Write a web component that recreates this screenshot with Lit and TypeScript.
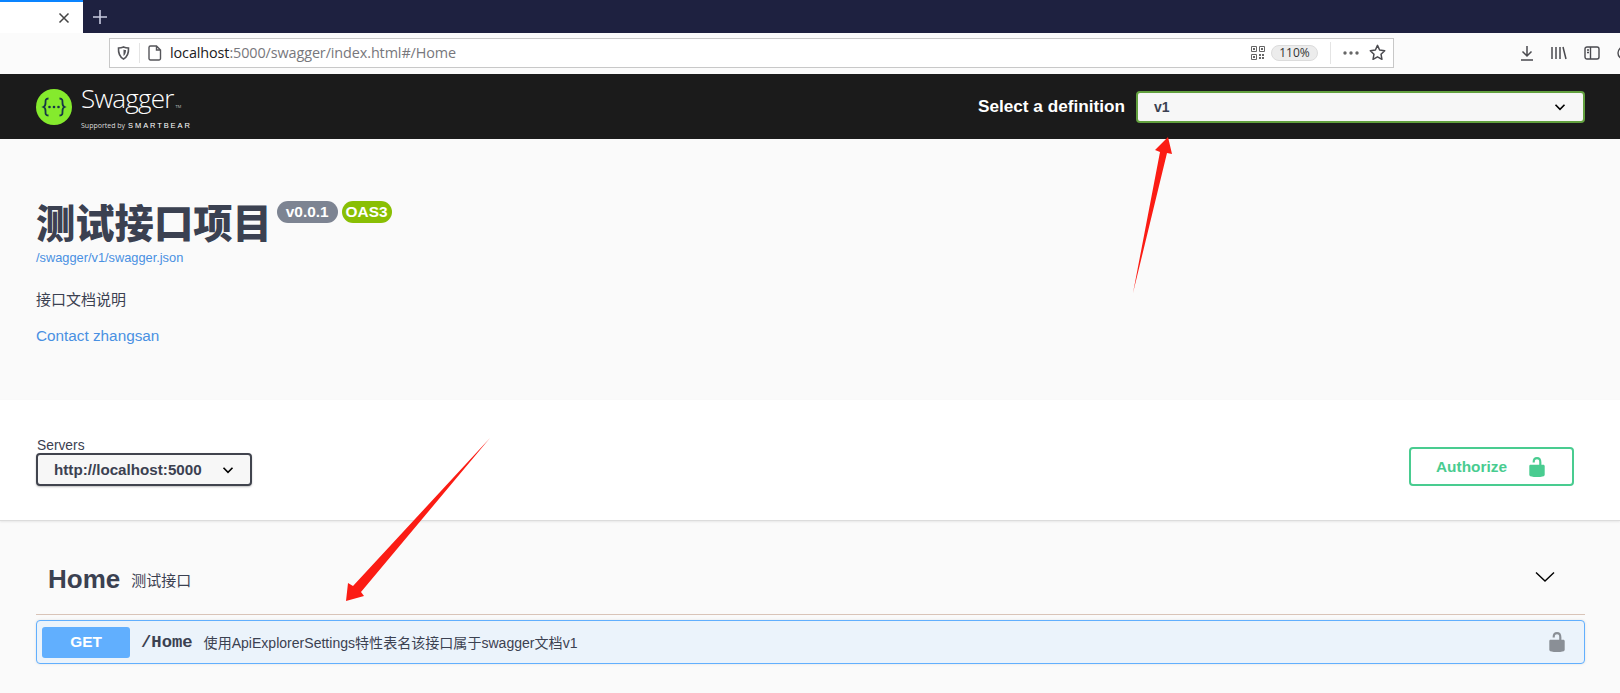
import { LitElement, html, css, svg } from "lit";
import { customElement } from "lit/decorators.js";

const lock = svg`<path d="M15.8 8H14V5.6C14 2.703 12.665 1 10 1 7.334 1 6 2.703 6 5.6V6h2v-.801C8 3.754 8.797 3 10 3c1.203 0 2 .754 2 2.199V8H4c-.553 0-1 .646-1 1.199V17c0 .549.428 1.139.951 1.307l1.197.387C5.672 18.861 6.55 19 7.1 19h5.8c.549 0 1.428-.139 1.951-.307l1.196-.387c.524-.167.953-.757.953-1.306V9.199C17 8.646 16.352 8 15.8 8z"/>`;

const chevron = svg`<path d="M2 5l6 6 6-6" fill="none" stroke="#000" stroke-width="2.2"/>`;

@customElement("app-root")
export class AppRoot extends LitElement {
  static styles = css`
    :host { display: block; position: relative; width: 1620px; height: 693px; overflow: hidden; background: #fafafa; font-family: "Liberation Sans", "Noto Sans CJK SC", sans-serif; color: #3b4151; }
    a { color: #4990e2; text-decoration: none; }
    svg { display: block; flex: none; }

    .tabs { height: 33px; background: #1e2140; display: flex; align-items: center; }
    .tab { width: 83px; height: 33px; box-sizing: border-box; background: #fff; border-top: 2px solid #0a84ff; display: flex; justify-content: flex-end; align-items: center; padding-right: 13px; }
    .plus { margin-left: 9px; }

    .toolbar { height: 41px; box-sizing: border-box; background: #fbfbfb; display: flex; align-items: center; padding: 0 0 2px 109px; }
    .url { flex: none; width: 1285px; height: 30px; box-sizing: border-box; background: #fff; border: 1px solid #c8c8c8; display: flex; align-items: center; padding: 0 7px 0 7px; font-family: "Open Sans", sans-serif; font-size: 14.4px; color: #77777c; }
    .url .sep { width: 1px; height: 20px; background: #e4e4e4; margin: 0 8px 0 9px; }
    .url b { font-weight: 400; color: #202023; }
    .addr { margin-left: 8px; flex: 1; letter-spacing: -0.1px; }
    .pill { width: 47px; height: 16px; border-radius: 8px; background: #ececec; border: 1px solid #dcdcdc; box-sizing: border-box; font: 12px "Open Sans", sans-serif; color: #333; display: flex; align-items: center; justify-content: center; margin: 0 12px 0 6px; }
    .dots { margin: 0 10px 0 12px; }
    .url .sep2 { width: 1px; height: 22px; background: #e4e4e4; }
    .tools { flex: none; display: flex; align-items: center; gap: 17px; margin-left: 126px; }

    .topbar { height: 65px; background: #1b1b1b; display: flex; align-items: center; justify-content: space-between; padding: 0 35px 0 36px; }
    .logo { display: flex; align-items: center; gap: 9px; color: #fff; margin-top: 1px; }
    .logo-text { display: flex; flex-direction: column; }
    .logo-name { font: 300 26px/30px "Open Sans", sans-serif; letter-spacing: -0.8px; }
    .logo-name sup { font-size: 4px; vertical-align: baseline; letter-spacing: 0; margin-left: 2px; }
    .logo-sub { font: 7px/10px "Open Sans", sans-serif; color: #ddd; display: flex; align-items: center; gap: 3px; margin-top: -1px; }
    .logo-sub b { font: 400 7.500px/10px "Liberation Sans", sans-serif; letter-spacing: 1.900px; color: #fff; }
    .def { display: flex; align-items: center; gap: 11px; color: #fff; font-weight: 700; font-size: 17.200px; }
    .def-select { width: 449px; height: 32px; box-sizing: border-box; border: 2px solid #62a03f; border-radius: 4px; background: #f7f7f7; color: #3b4151; padding: 0 17px 0 16px; display: flex; align-items: center; justify-content: space-between; font-size: 14px; }

    .info { height: 261px; box-sizing: border-box; padding: 60px 36px 0; background: #fafafa; }
    .title { display: flex; align-items: flex-start; gap: 4px; }
    h1 { margin: 0; font-size: 39.300px; line-height: 50px; font-weight: 900; color: #3b4151; }
    .badge { height: 22px; border-radius: 11px; color: #fff; font-weight: 700; font-size: 15.400px; display: flex; align-items: center; padding: 0 9px; margin-top: 2px; }
    .badge.gray { background: #7d8492; margin-left: 1px; }
    .badge.green { background: #89bf04; padding: 0 4px; }
    .json { display: block; font-size: 12.800px; line-height: 16px; margin-top: 1px; }
    .desc { font-size: 15px; line-height: 20px; margin-top: 24px; color: #3b4151; }
    .contact { display: block; font-size: 15.300px; line-height: 20px; margin-top: 16px; }

    .servers { height: 121px; box-sizing: border-box; background: #fff; border-bottom: 1px solid #dcdcdc; box-shadow: 0 1px 2px rgba(0,0,0,.08); display: flex; justify-content: space-between; padding: 38px 46px 0 36px; }
    .label { font-size: 13.800px; line-height: 16px; margin-left: 1px; }
    .srv-select { width: 216px; height: 33px; box-sizing: border-box; border: 2px solid #41444e; border-radius: 4px; background: #f7f7f7; box-shadow: 0 1px 2px rgba(0,0,0,.25); display: flex; align-items: center; justify-content: space-between; padding: 0 16px 0 16px; font-weight: 700; font-size: 15.200px; margin-top: -1px; }
    .auth { width: 165px; height: 39px; box-sizing: border-box; border: 2px solid #49cc90; border-radius: 4px; color: #49cc90; font-weight: 700; font-size: 15.400px; display: flex; align-items: center; gap: 19px; padding-left: 25px; margin-top: 9px; }

    .tag { height: 94px; box-sizing: border-box; margin: 0 35px 0 36px; border-bottom: 1px solid #d9c4b8; display: flex; align-items: center; padding: 24px 30px 0 12px; }
    .tag h2 { margin: 0; font-size: 26px; line-height: 30px; font-weight: 700; margin-top: -2px; }
    .tag small { font-size: 15px; margin-left: 11px; color: #3b4151; }
    .tag svg { margin-left: auto; margin-top: -5px; }

    .op { margin: 5px 35px 0 36px; height: 44px; box-sizing: border-box; border: 1px solid #61affe; border-radius: 4px; background: #ebf3fb; display: flex; align-items: center; padding: 0 16px 0 5px; box-shadow: 0 0 3px rgba(0,0,0,.1); }
    .get { width: 88px; height: 31px; border-radius: 3px; background: #61affe; color: #fff; font-weight: 700; font-size: 15.400px; display: flex; align-items: center; justify-content: center; }
    .path { font: 700 17.200px "Liberation Mono", monospace; margin-left: 11px; }
    .op-desc { font-size: 14.050px; margin-left: 11px; flex: 1; }

    .arrows { position: absolute; inset: 0; pointer-events: none; }
  `;

  render() {
    return html`
      <div class="tabs">
        <div class="tab">
          <svg width="12" height="12" viewBox="0 0 12 12"><path d="M1.500 1.500l9 9M10.500 1.500l-9 9" stroke="#444" stroke-width="1.500"/></svg>
        </div>
        <svg class="plus" width="16" height="16" viewBox="0 0 16 16"><path d="M8 1v14M1 8h14" stroke="#c9cbe0" stroke-width="1.600"/></svg>
      </div>
      <div class="toolbar">
        <div class="url">
          <svg width="13" height="14" viewBox="0 0 13 14"><path d="M6.500 1c2 .9 3.500 1 5 1 .3 5-1.300 9-5 11C2.800 11 1.200 7 1.500 2c1.500 0 3-.1 5-1z" fill="none" stroke="#55555a" stroke-width="1.600"/><path d="M6.500 3.500c1 .4 1.700.5 2.500.5 0 2.700-.8 4.700-2.500 6z" fill="#55555a"/></svg>
          <span class="sep"></span>
          <svg width="14" height="16" viewBox="0 0 14 16"><path d="M2.500 1h6l4 4v8.500a1.500 1.500 0 0 1-1.500 1.500H2.500A1.500 1.500 0 0 1 1 13.500v-11A1.500 1.500 0 0 1 2.500 1zM8.500 1v4h4" fill="none" stroke="#55555a" stroke-width="1.400"/></svg>
          <span class="addr"><b>localhost</b>:5000/swagger/index.html#/Home</span>
          <svg width="14" height="14" viewBox="0 0 14 14" fill="none" stroke="#666"><path d="M.5.500h5v5h-5zM8.500.500h5v5h-5zM.5 8.500h5v5h-5z"/><path d="M2 2h2v2H2zM10 2h2v2h-2zM2 10h2v2H2zM8 8h2v2H8zM11 8h2v2h-2zM8 11h2v2H8zM11 11h2v2h-2z" fill="#666" stroke="none"/></svg>
          <span class="pill">110%</span>
          <span class="sep2"></span>
          <svg class="dots" width="16" height="4" viewBox="0 0 16 4" fill="#666"><circle cx="2" cy="2" r="1.700"/><circle cx="8" cy="2" r="1.700"/><circle cx="14" cy="2" r="1.700"/></svg>
          <svg width="17" height="17" viewBox="0 0 16 16"><path d="M8 1.300l2 4.400 4.800.6-3.500 3.300.9 4.800L8 12.100l-4.200 2.300.9-4.800L1.200 6.300 6 5.700z" fill="none" stroke="#4a4a4f" stroke-width="1.400" stroke-linejoin="round"/></svg>
        </div>
        <div class="tools">
          <svg width="14" height="16" viewBox="0 0 14 16" fill="none" stroke="#4a4a4f" stroke-width="1.500"><path d="M7 1v10M2.500 6.500L7 11l4.500-4.500M1 15h12"/></svg>
          <svg width="16" height="14" viewBox="0 0 16 14" fill="none" stroke="#4a4a4f" stroke-width="1.500"><path d="M1 1v12M5 1v12M9 1v12M12 1l3 12"/></svg>
          <svg width="16" height="14" viewBox="0 0 16 14" fill="none" stroke="#4a4a4f" stroke-width="1.400"><rect x="1" y="1" width="14" height="12" rx="2"/><path d="M6.500 1v12M3 4h2M3 6.500h2"/></svg>
          <svg width="14" height="14" viewBox="0 0 14 14" fill="none" stroke="#4a4a4f" stroke-width="1.400"><circle cx="7" cy="7" r="6"/></svg>
        </div>
      </div>
      <div class="topbar">
        <div class="logo">
          <svg width="36" height="36" viewBox="0 0 36 36">
            <circle cx="18" cy="18" r="18" fill="#85ea2d"/>
            <path d="M12.500 9.500c-3 0-3 1.500-3 4s.2 3.500-2 4.500c2.200 1 2 2 2 4.500s0 4 3 4M23.500 9.500c3 0 3 1.500 3 4s-.2 3.500 2 4.500c-2.200 1-2 2-2 4.500s0 4-3 4" fill="none" stroke="#173647" stroke-width="1.800"/>
            <circle cx="13.500" cy="18" r="1.300" fill="#173647"/><circle cx="18" cy="18" r="1.300" fill="#173647"/><circle cx="22.500" cy="18" r="1.300" fill="#173647"/>
          </svg>
          <div class="logo-text">
            <span class="logo-name">Swagger<sup>TM</sup></span>
            <span class="logo-sub">Supported by <b>SMARTBEAR</b></span>
          </div>
        </div>
        <div class="def">
          <span>Select a definition</span>
          <div class="def-select">
            <span>v1</span>
            <svg width="12" height="12" viewBox="0 0 16 16">${chevron}</svg>
          </div>
        </div>
      </div>
      <section class="info">
        <div class="title">
          <h1>测试接口项目</h1>
          <span class="badge gray">v0.0.1</span>
          <span class="badge green">OAS3</span>
        </div>
        <a class="json">/swagger/v1/swagger.json</a>
        <div class="desc">接口文档说明</div>
        <a class="contact">Contact zhangsan</a>
      </section>
      <section class="servers">
        <div>
          <div class="label">Servers</div>
          <div class="srv-select">
            <span>http://localhost:5000</span>
            <svg width="12" height="12" viewBox="0 0 16 16">${chevron}</svg>
          </div>
        </div>
        <div class="auth">
          <span>Authorize</span>
          <svg width="22" height="22" viewBox="0 0 20 20" fill="#49cc90">${lock}</svg>
        </div>
      </section>
      <div class="tag">
        <h2>Home</h2>
        <small>测试接口</small>
        <svg width="20" height="20" viewBox="0 0 20 20"><path d="M1 5.500l9 8.500 9-8.500" fill="none" stroke="#000" stroke-width="1.400"/></svg>
      </div>
      <div class="op">
        <span class="get">GET</span>
        <span class="path">/Home</span>
        <span class="op-desc">使用ApiExplorerSettings特性表名该接口属于swagger文档v1</span>
        <svg width="22" height="22" viewBox="0 0 20 20" fill="#8a8f96">${lock}</svg>
      </div>
      <svg class="arrows" width="1620" height="693" viewBox="0 0 1620 693">
        <path d="M1133 293L1160 152 1155 150 1168 137 1172 154 1167 153z" fill="#fb1c14"/>
        <path d="M490 438L353 586 348 583 346 601 364 596 361 592z" fill="#fb1c14"/>
      </svg>
    `;
  }
}
